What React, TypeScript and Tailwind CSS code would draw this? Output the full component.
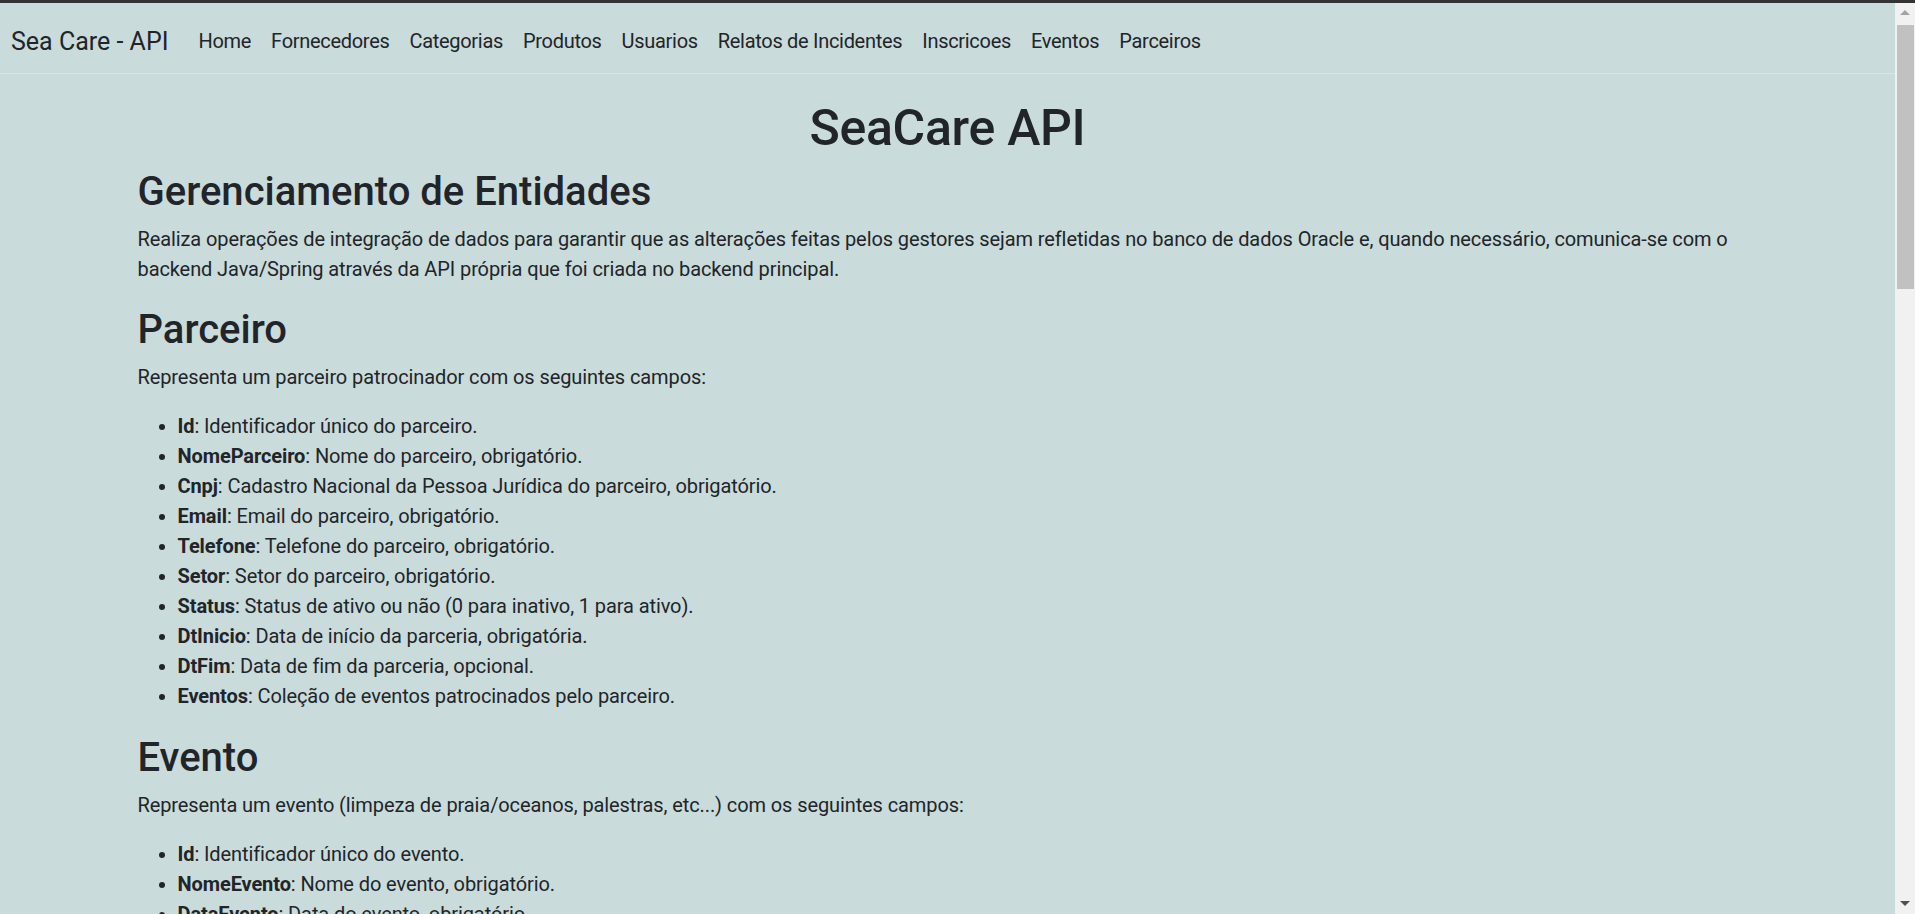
import React from "react";

const navLinks = [
  "Home",
  "Fornecedores",
  "Categorias",
  "Produtos",
  "Usuarios",
  "Relatos de Incidentes",
  "Inscricoes",
  "Eventos",
  "Parceiros",
];

const parceiroFields: [string, string][] = [
  ["Id", "Identificador único do parceiro."],
  ["NomeParceiro", "Nome do parceiro, obrigatório."],
  ["Cnpj", "Cadastro Nacional da Pessoa Jurídica do parceiro, obrigatório."],
  ["Email", "Email do parceiro, obrigatório."],
  ["Telefone", "Telefone do parceiro, obrigatório."],
  ["Setor", "Setor do parceiro, obrigatório."],
  ["Status", "Status de ativo ou não (0 para inativo, 1 para ativo)."],
  ["DtInicio", "Data de início da parceria, obrigatória."],
  ["DtFim", "Data de fim da parceria, opcional."],
  ["Eventos", "Coleção de eventos patrocinados pelo parceiro."],
];

const eventoFields: [string, string][] = [
  ["Id", "Identificador único do evento."],
  ["NomeEvento", "Nome do evento, obrigatório."],
  ["DataEvento", "Data do evento, obrigatório."],
  ["Local", "Local do evento, obrigatório."],
  ["Descricao", "Descrição do evento, opcional."],
];

function FieldList({ items }: { items: [string, string][] }) {
  return (
    <ul className="list-disc pl-[40px] pt-[1px] mb-[19px]">
      {items.map(([k, v]) => (
        <li key={k} className="leading-[30px]">
          <b className="font-bold">{k}</b>: {v}
        </li>
      ))}
    </ul>
  );
}

export default function App() {
  return (
    <div className="h-[914px] w-full overflow-hidden flex flex-col bg-[#cadbdb] text-[#212529] font-['Roboto',sans-serif] text-[20px] leading-[30px]">
      <div className="h-[3px] w-full bg-[#333333] shrink-0" />
      <div className="flex flex-1 min-h-0">
        <div className="flex-1 min-w-0 flex flex-col">
          <header className="h-[71px] shrink-0 border-b border-[#dde3e3] flex items-center pl-[11px] pt-[6px] mb-[20px]">
            <span className="text-[25px] leading-[37px] mr-[20px]">Sea Care - API</span>
            <nav className="flex items-center">
              {navLinks.map((l) => (
                <a key={l} className="px-[10px] py-[10px] tracking-[-0.3px]">
                  {l}
                </a>
              ))}
            </nav>
          </header>
          <main className="w-[1650px] mx-auto px-[15px] tracking-[-0.1px]">
            <h1 className="text-center text-[50px] leading-[60px] font-medium pt-[4px] mb-[6px] tracking-[-0.3px]">
              SeaCare API
            </h1>
            <h2 className="text-[40px] leading-[48px] font-medium pt-[4px] mb-[6px] tracking-normal">
              Gerenciamento de Entidades
            </h2>
            <p className="pt-[2px] mb-[18px]">
              Realiza operações de integração de dados para garantir que as alterações feitas pelos gestores sejam
              refletidas no banco de dados Oracle e, quando necessário, comunica-se com o backend Java/Spring através da
              API própria que foi criada no backend principal.
            </p>
            <h2 className="text-[40px] leading-[48px] font-medium pt-[4px] mb-[6px] tracking-normal">Parceiro</h2>
            <p className="pt-[2px] mb-[18px]">Representa um parceiro patrocinador com os seguintes campos:</p>
            <FieldList items={parceiroFields} />
            <h2 className="text-[40px] leading-[48px] font-medium pt-[4px] mb-[6px] tracking-normal">Evento</h2>
            <p className="pt-[2px] mb-[18px]">
              Representa um evento (limpeza de praia/oceanos, palestras, etc...) com os seguintes campos:
            </p>
            <FieldList items={eventoFields} />
          </main>
        </div>
        <div className="w-[20px] shrink-0 bg-[#f1f1f1] flex flex-col items-center">
          <div className="h-[20px] w-full flex items-center justify-center">
            <svg width="10" height="6" viewBox="0 0 10 6">
              <polygon points="5,0 10,5 0,5" fill="#a3a3a3" />
            </svg>
          </div>
          <div className="w-[17px] h-[264px] bg-[#c1c1c1] mt-[2px]" />
          <div className="flex-1" />
          <div className="h-[20px] w-full flex items-center justify-center">
            <svg width="10" height="6" viewBox="0 0 10 6">
              <polygon points="0,0 10,0 5,5" fill="#505050" />
            </svg>
          </div>
        </div>
      </div>
    </div>
  );
}
